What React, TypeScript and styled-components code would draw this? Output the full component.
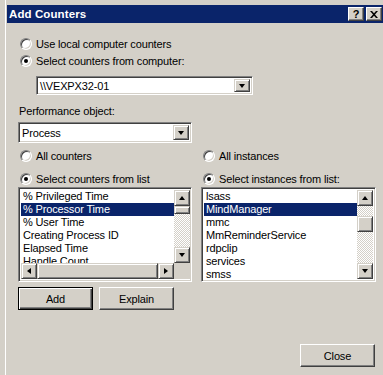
import styled, { createGlobalStyle } from "styled-components";

const GlobalStyle = createGlobalStyle`
  html, body {
    margin: 0;
    background: #d4d0c8;
  }
  body {
    font-family: "Liberation Sans", Arial, sans-serif;
    font-size: 11px;
    letter-spacing: -0.15px;
    color: #000;
  }
`;

const Page = styled.div`
  width: 383px;
  height: 375px;
  overflow: hidden;
  padding-left: 5px;
  box-sizing: border-box;
  background: #d4d0c8;
`;

const Window = styled.div`
  height: 100%;
  border-left: 1px solid #fff;
  padding-left: 1px;
  padding-top: 5px;
  box-sizing: border-box;
  display: flex;
  flex-direction: column;
`;

const TitleBar = styled.div`
  height: 18px;
  background: #0a246a;
  display: flex;
  align-items: center;
  padding: 0 1px 0 2px;
  gap: 2px;
`;

const Title = styled.div`
  flex: 1;
  color: #fff;
  font-weight: bold;
  font-size: 11.5px;
  letter-spacing: 0.1px;
`;

const CaptionButton = styled.div`
  width: 16px;
  height: 14px;
  box-sizing: border-box;
  background: #d4d0c8;
  border: 1px solid;
  border-color: #fff #404040 #404040 #fff;
  box-shadow: inset -1px -1px #808080;
  display: flex;
  align-items: center;
  justify-content: center;
  font-weight: bold;
  font-size: 11px;
  line-height: 1;
`;

const Body = styled.div`
  flex: 1;
  padding: 12px 8px 0 11px;
  display: flex;
  flex-direction: column;
`;

const RadioRow = styled.label<{ $gap?: number }>`
  height: 17px;
  display: flex;
  align-items: center;
  gap: 4px;
  padding-left: 2px;
  margin-top: ${(p) => p.$gap || 0}px;
  white-space: nowrap;
`;

const RadioDot = styled.span<{ $on?: boolean }>`
  width: 12px;
  height: 12px;
  box-sizing: border-box;
  border-radius: 50%;
  background: #fff;
  border: 1px solid;
  border-color: #808080 #fff #fff #808080;
  box-shadow: inset 1px 1px #404040, inset -1px -1px #d4d0c8;
  display: flex;
  align-items: center;
  justify-content: center;
  &::after {
    content: "";
    width: 4px;
    height: 4px;
    border-radius: 50%;
    background: #000;
    display: ${(p) => (p.$on ? "block" : "none")};
  }
`;

const Sunken = styled.div`
  box-sizing: border-box;
  background: #fff;
  border: 1px solid;
  border-color: #808080 #fff #fff #808080;
  box-shadow: inset 1px 1px #404040, inset -1px -1px #d4d0c8;
  padding: 2px;
`;

const Combo = styled(Sunken)<{ $w: number; $h: number; $indent?: number; $top?: number }>`
  width: ${(p) => p.$w}px;
  height: ${(p) => p.$h}px;
  margin-left: ${(p) => p.$indent || 0}px;
  margin-top: ${(p) => p.$top || 0}px;
  display: flex;
  align-items: stretch;
`;

const ComboText = styled.div`
  flex: 1;
  display: flex;
  align-items: center;
  padding-left: 1px;
`;

const ArrowButton = styled.div<{ $h?: number }>`
  width: 16px;
  height: ${(p) => (p.$h ? `${p.$h}px` : "auto")};
  flex-shrink: 0;
  box-sizing: border-box;
  background: #d4d0c8;
  border: 1px solid;
  border-color: #d4d0c8 #404040 #404040 #d4d0c8;
  box-shadow: inset 1px 1px #fff, inset -1px -1px #808080;
  display: flex;
  align-items: center;
  justify-content: center;
`;

const Arrow = styled.span<{ $dir: "up" | "down" | "left" | "right" }>`
  width: 0;
  height: 0;
  border-style: solid;
  border-color: transparent;
  ${(p) =>
    p.$dir === "down"
      ? "border-width: 4px 3.5px 0 3.5px; border-top-color: #000;"
      : p.$dir === "up"
      ? "border-width: 0 3.5px 4px 3.5px; border-bottom-color: #000;"
      : p.$dir === "left"
      ? "border-width: 3.5px 4px 3.5px 0; border-right-color: #000;"
      : "border-width: 3.5px 0 3.5px 4px; border-left-color: #000;"}
`;

const FieldLabel = styled.div`
  height: 13px;
  line-height: 13px;
  margin-top: 10px;
  padding-left: 1px;
`;

const Columns = styled.div`
  display: grid;
  grid-template-columns: 174px 175px;
  column-gap: 9px;
  margin-top: 4px;
`;

const Column = styled.div`
  display: flex;
  flex-direction: column;
`;

const ListBox = styled(Sunken)<{ $hscroll?: boolean }>`
  height: 95px;
  display: grid;
  grid-template-columns: 1fr 16px;
  grid-template-rows: ${(p) => (p.$hscroll ? "1fr 16px" : "1fr")};
  overflow: hidden;
`;

const Items = styled.div`
  overflow: hidden;
  min-width: 0;
`;

const Item = styled.div<{ $sel?: boolean }>`
  height: 13px;
  line-height: 13px;
  padding-left: 2px;
  white-space: nowrap;
  background: ${(p) => (p.$sel ? "#0a246a" : "transparent")};
  color: ${(p) => (p.$sel ? "#fff" : "#000")};
`;

const VScroll = styled.div`
  display: flex;
  flex-direction: column;
`;

const HScroll = styled.div`
  display: flex;
`;

const Track = styled.div<{ $size?: number }>`
  ${(p) => (p.$size !== undefined ? `flex: 0 0 ${p.$size}px;` : "flex: 1;")}
  background-color: #fff;
  background-image: repeating-conic-gradient(#d4d0c8 0 25%, #fff 0 50%);
  background-size: 2px 2px;
`;

const Thumb = styled(ArrowButton)<{ $len: number; $horiz?: boolean }>`
  ${(p) =>
    p.$horiz
      ? `width: ${p.$len}px; height: 16px;`
      : `height: ${p.$len}px; width: 16px;`}
`;

const Corner = styled.div`
  background: #d4d0c8;
`;

const ButtonRow = styled.div`
  display: flex;
  gap: 6px;
  margin-top: 5px;
`;

const PushButton = styled.button<{ $default?: boolean }>`
  width: 75px;
  height: 23px;
  box-sizing: border-box;
  padding: 0;
  font: inherit;
  letter-spacing: inherit;
  color: #000;
  background: #d4d0c8;
  border: 1px solid;
  border-color: ${(p) => (p.$default ? "#000" : "#fff #404040 #404040 #fff")};
  box-shadow: ${(p) =>
    p.$default
      ? "inset 1px 1px #fff, inset -1px -1px #404040, inset -2px -2px #808080"
      : "inset -1px -1px #808080"};
`;

const Footer = styled.div`
  display: flex;
  justify-content: flex-end;
  margin-top: 34px;
`;

function Radio({ label, on, gap }: { label: string; on?: boolean; gap?: number }) {
  return (
    <RadioRow $gap={gap}>
      <RadioDot $on={on} />
      <span>{label}</span>
    </RadioRow>
  );
}

const counters = [
  "% Privileged Time",
  "% Processor Time",
  "% User Time",
  "Creating Process ID",
  "Elapsed Time",
  "Handle Count",
];

const instances = [
  "lsass",
  "MindManager",
  "mmc",
  "MmReminderService",
  "rdpclip",
  "services",
  "smss",
];

export default function App() {
  return (
    <Page>
      <GlobalStyle />
      <Window>
        <TitleBar>
          <Title>Add Counters</Title>
          <CaptionButton>?</CaptionButton>
          <CaptionButton>
            <svg width="8" height="7" viewBox="0 0 8 7">
              <path d="M0 0h2l2 2.2L6 0h2L5 3.5 8 7H6L4 4.8 2 7H0l3-3.5z" fill="#000" />
            </svg>
          </CaptionButton>
        </TitleBar>

        <Body>
          <Radio label="Use local computer counters" />
          <Radio label="Select counters from computer:" on />
          <Combo $w={217} $h={19} $indent={18} $top={7}>
            <ComboText>\\VEXPX32-01</ComboText>
            <ArrowButton>
              <Arrow $dir="down" />
            </ArrowButton>
          </Combo>

          <FieldLabel>Performance object:</FieldLabel>
          <Combo $w={174} $h={21} $top={4}>
            <ComboText>Process</ComboText>
            <ArrowButton>
              <Arrow $dir="down" />
            </ArrowButton>
          </Combo>

          <Columns>
            <Column>
              <Radio label="All counters" />
              <Radio label="Select counters from list" on gap={6} />
              <ListBox $hscroll>
                <Items>
                  {counters.map((c, i) => (
                    <Item key={c} $sel={i === 1}>
                      {c}
                    </Item>
                  ))}
                </Items>
                <VScroll>
                  <ArrowButton $h={16}>
                    <Arrow $dir="up" />
                  </ArrowButton>
                  <Thumb $len={8} />
                  <Track />
                  <ArrowButton $h={16}>
                    <Arrow $dir="down" />
                  </ArrowButton>
                </VScroll>
                <HScroll>
                  <ArrowButton $h={16}>
                    <Arrow $dir="left" />
                  </ArrowButton>
                  <Thumb $len={121} $horiz />
                  <Track />
                  <ArrowButton $h={16}>
                    <Arrow $dir="right" />
                  </ArrowButton>
                </HScroll>
                <Corner />
              </ListBox>
            </Column>

            <Column>
              <Radio label="All instances" />
              <Radio label="Select instances from list:" on gap={6} />
              <ListBox>
                <Items>
                  {instances.map((c, i) => (
                    <Item key={c} $sel={i === 1}>
                      {c}
                    </Item>
                  ))}
                </Items>
                <VScroll>
                  <ArrowButton $h={16}>
                    <Arrow $dir="up" />
                  </ArrowButton>
                  <Track $size={10} />
                  <Thumb $len={16} />
                  <Track />
                  <ArrowButton $h={16}>
                    <Arrow $dir="down" />
                  </ArrowButton>
                </VScroll>
              </ListBox>
            </Column>
          </Columns>

          <ButtonRow>
            <PushButton $default>Add</PushButton>
            <PushButton>Explain</PushButton>
          </ButtonRow>

          <Footer>
            <PushButton>Close</PushButton>
          </Footer>
        </Body>
      </Window>
    </Page>
  );
}
